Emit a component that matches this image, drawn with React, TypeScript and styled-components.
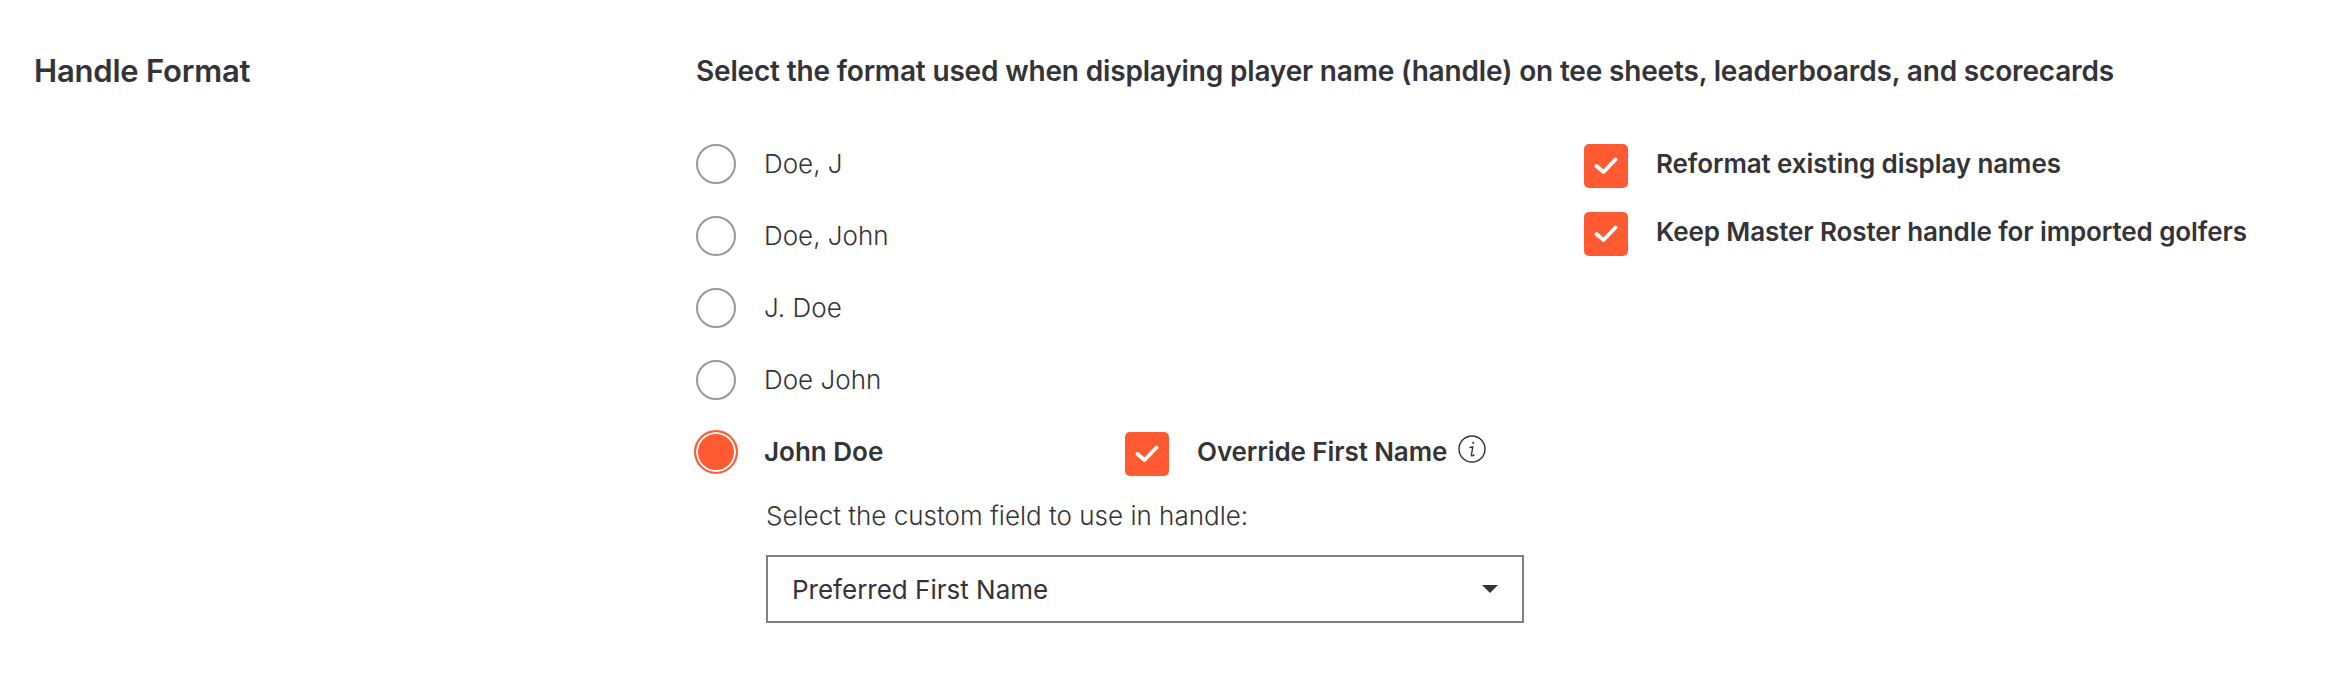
import React from "react";
import styled, { createGlobalStyle } from "styled-components";

const Global = createGlobalStyle`
  html, body { margin: 0; padding: 0; background: #fff; }
  body { font-family: "Inter", "Open Sans", sans-serif; color: #333338; }
`;

const Page = styled.div`
  display: flex;
  width: 2328px;
  height: 676px;
  padding: 52px 0 0 34px;
  box-sizing: border-box;
`;

const SectionTitle = styled.h2`
  margin: 0;
  width: 662px;
  flex: none;
  font-size: 31px;
  line-height: 38px;
  font-weight: 600;
  letter-spacing: -0.2px;
`;

const Content = styled.div`
  display: flex;
  flex-direction: column;
`;

const Description = styled.p`
  margin: 0 0 54px;
  font-size: 28px;
  line-height: 38px;
  font-weight: 600;
  letter-spacing: -0.17px;
  white-space: nowrap;
`;

const Columns = styled.div`
  display: flex;
`;

const RadioColumn = styled.div`
  width: 888px;
  flex: none;
  display: flex;
  flex-direction: column;
  gap: 32px;
`;

const OptionRow = styled.div`
  display: flex;
  align-items: center;
  height: 40px;
`;

const RadioCircle = styled.span<{ $on?: boolean }>`
  width: ${(p) => (p.$on ? 44 : 40)}px;
  height: ${(p) => (p.$on ? 44 : 40)}px;
  margin: ${(p) => (p.$on ? "0 -2px" : "0")};
  flex: none;
  box-sizing: border-box;
  border-radius: 50%;
  border: 2px solid ${(p) => (p.$on ? "#ff5a31" : "#999")};
  background: ${(p) => (p.$on ? "#ff5a31" : "#fff")};
  box-shadow: ${(p) => (p.$on ? "inset 0 0 0 2px #fff" : "none")};
`;

const OptionLabel = styled.span<{ $on?: boolean }>`
  margin-left: 28px;
  width: 361px;
  flex: none;
  font-size: 26px;
  line-height: 40px;
  font-weight: ${(p) => (p.$on ? 600 : 300)};
`;

const CheckRow = styled.div<{ $low?: boolean }>`
  display: flex;
  align-items: center;
  gap: 28px;
  margin-top: ${(p) => (p.$low ? 4 : 0)}px;
`;

const Box = styled.span`
  width: 44px;
  height: 44px;
  flex: none;
  border-radius: 5px;
  background: #ff5a31;
  display: flex;
  align-items: center;
  justify-content: center;
`;

const CheckLabel = styled.span`
  font-size: 26px;
  line-height: 40px;
  padding-bottom: 4px;
  font-weight: 600;
  letter-spacing: -0.1px;
  white-space: nowrap;
`;

const InfoIcon = styled.svg`
  width: 28px;
  height: 28px;
  margin-left: 11px;
  margin-top: -6px;
  flex: none;
`;

const CustomField = styled.div`
  margin: -8px 0 0 70px;
  display: flex;
  flex-direction: column;
`;

const FieldLabel = styled.div`
  font-size: 26px;
  line-height: 40px;
  font-weight: 300;
`;

const SelectBox = styled.div`
  margin-top: 19px;
  width: 758px;
  height: 68px;
  box-sizing: border-box;
  border: 2px solid #808080;
  display: flex;
  align-items: center;
  justify-content: space-between;
  padding: 0 24px;
  font-size: 26px;
  font-weight: 400;
`;

const Caret = styled.svg`
  width: 16px;
  height: 8px;
  flex: none;
`;

const SideColumn = styled.div`
  display: flex;
  flex-direction: column;
  gap: 24px;
`;

const Check = () => (
  <svg width="24" height="20" viewBox="0 0 24 20" fill="none">
    <path d="M2.5 10 L9.5 16 L21.5 3.5" stroke="#fff" strokeWidth="3.8" strokeLinecap="round" strokeLinejoin="round" />
  </svg>
);

const options = ["Doe, J", "Doe, John", "J. Doe", "Doe John"];

export default function App() {
  return (
    <>
      <Global />
      <Page>
        <SectionTitle>Handle Format</SectionTitle>
        <Content>
          <Description>Select the format used when displaying player name (handle) on tee sheets, leaderboards, and scorecards</Description>
          <Columns>
            <RadioColumn>
              {options.map((o) => (
                <OptionRow key={o}>
                  <RadioCircle />
                  <OptionLabel>{o}</OptionLabel>
                </OptionRow>
              ))}
              <OptionRow>
                <RadioCircle $on />
                <OptionLabel $on>John Doe</OptionLabel>
                <CheckRow $low>
                  <Box><Check /></Box>
                  <CheckLabel>Override First Name</CheckLabel>
                </CheckRow>
                <InfoIcon viewBox="0 0 28 28" fill="none" stroke="#333338" strokeWidth="1.4">
                  <circle cx="14" cy="14" r="13" />
                  <path d="M12 12.5 L14.8 12 L13.4 20 Q13.3 21 14.2 20.8 L16 20" strokeLinecap="round" strokeLinejoin="round" />
                  <circle cx="15.2" cy="7.8" r="1" fill="#333338" stroke="none" />
                </InfoIcon>
              </OptionRow>
              <CustomField>
                <FieldLabel>Select the custom field to use in handle:</FieldLabel>
                <SelectBox>
                  Preferred First Name
                  <Caret viewBox="0 0 16 8"><path d="M0 0 H16 L8 8 Z" fill="#333338" /></Caret>
                </SelectBox>
              </CustomField>
            </RadioColumn>
            <SideColumn>
              <CheckRow>
                <Box><Check /></Box>
                <CheckLabel>Reformat existing display names</CheckLabel>
              </CheckRow>
              <CheckRow>
                <Box><Check /></Box>
                <CheckLabel>Keep Master Roster handle for imported golfers</CheckLabel>
              </CheckRow>
            </SideColumn>
          </Columns>
        </Content>
      </Page>
    </>
  );
}
